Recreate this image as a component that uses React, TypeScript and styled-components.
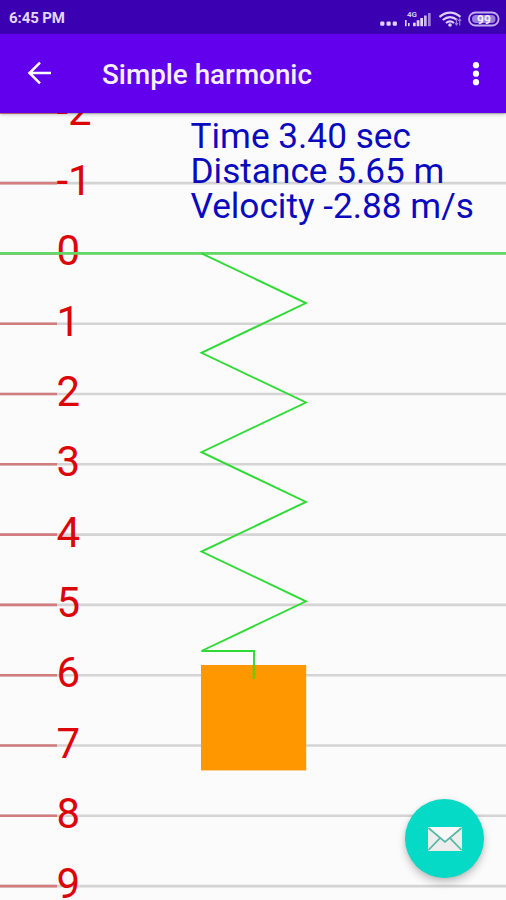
import React from "react";
import styled, { createGlobalStyle } from "styled-components";

const GlobalStyle = createGlobalStyle`
  *, *::before, *::after { box-sizing: border-box; }
  body { margin: 0; background: #fbfbfb; font-family: Roboto, "Liberation Sans", sans-serif; }
`;

const Screen = styled.div`
  display: flex;
  flex-direction: column;
  width: 506px;
  height: 900px;
  overflow: hidden;
  background: #fbfbfb;
`;

const StatusBar = styled.div`
  display: flex;
  align-items: center;
  justify-content: space-between;
  flex: none;
  height: 34px;
  padding: 2px 6px 0 9px;
  background: #3a00b2;
  z-index: 2;
`;

const Clock = styled.span`
  color: #e4d8f8;
  font-size: 15px;
  font-weight: 700;
  line-height: 20px;
  letter-spacing: -0.1px;
`;

const StatusIcons = styled.svg`
  display: block;
  width: 122px;
  height: 24px;
`;

const AppBar = styled.header`
  display: flex;
  align-items: center;
  flex: none;
  height: 79px;
  padding: 0 21px 0 26px;
  background: #6200ee;
  box-shadow: 0 1px 4px rgba(0, 0, 0, 0.3);
  z-index: 1;
`;

const IconButton = styled.button`
  display: flex;
  padding: 0;
  border: 0;
  background: none;
  color: #fff;
`;

const Title = styled.h1`
  flex: 1;
  margin: 3px 0 0 49px;
  color: #f6efff;
  font-size: 27.8px;
  font-weight: 500;
  line-height: 36px;
`;

const Content = styled.main`
  position: relative;
  flex: 1;
  overflow: hidden;
`;

const Chart = styled.svg`
  display: block;
  width: 506px;
  height: 787px;
`;

const AxisLabel = styled.text`
  fill: #dc0509;
  font-family: Roboto, "Liberation Sans", sans-serif;
  font-size: 42px;
`;

const Readout = styled.div`
  position: absolute;
  left: 190.5px;
  top: 6px;
  color: #0a0abf;
  font-size: 35.2px;
  line-height: 35.2px;
  white-space: nowrap;
`;

const ReadoutLine = styled.div``;

const MailButton = styled.button`
  position: absolute;
  right: 22px;
  bottom: 22px;
  display: flex;
  align-items: center;
  justify-content: center;
  width: 79px;
  height: 79px;
  padding: 0;
  border: 0;
  border-radius: 50%;
  background: #04dac5;
  box-shadow: 0 5px 9px rgba(0, 0, 0, 0.2), 0 1px 4px rgba(0, 0, 0, 0.1);
`;

const UNIT = 70.3;
const ORIGIN = 140.4;
const marks = [-2, -1, 0, 1, 2, 3, 4, 5, 6, 7, 8, 9];
const lineY = (mark: number) => ORIGIN + mark * UNIT;

const springPoints = Array.from({ length: 9 }, (_, i) => `${i % 2 ? 306 : 201.5},${ORIGIN + i * 49.7}`)
  .concat(["254,538", "254,566"])
  .join(" ");

function Oscillator() {
  return (
    <Chart viewBox="0 0 506 787">
      {marks.map((mark) => (
        <g key={mark}>
          <line x1="0" x2="506" y1={lineY(mark)} y2={lineY(mark)} stroke="#d4d4d4" strokeWidth="2.6" />
          <line x1="0" x2="57" y1={lineY(mark)} y2={lineY(mark)} stroke="#d27c7f" strokeWidth="2.6" />
        </g>
      ))}
      {marks.map((mark) => (
        <AxisLabel key={mark} x="56.5" y={lineY(mark) + 12}>
          {mark}
        </AxisLabel>
      ))}
      <rect x="201" y="552" width="105.2" height="105.4" fill="#ff9800" />
      <line x1="0" x2="506" y1={ORIGIN} y2={ORIGIN} stroke="#62d966" strokeWidth="2.6" />
      <polyline points={springPoints} fill="none" stroke="#2edb34" strokeWidth="1.9" />
      <line x1="254" x2="254" y1="552" y2="566" stroke="#7bc400" strokeWidth="2.8" />
    </Chart>
  );
}

function SystemIcons() {
  return (
    <StatusIcons viewBox="378 4 122 24" fill="none">
      <g fill="#e2d5fa">
        <rect x="380.2" y="19.6" width="4.2" height="4.2" rx="1.2" />
        <rect x="386.5" y="19.6" width="4.2" height="4.2" rx="1.2" />
        <rect x="392.7" y="19.6" width="4.2" height="4.2" rx="1.2" />
        <rect x="405" y="18" width="1.6" height="6.2" />
        <rect x="408" y="21" width="1.6" height="3.2" />
        <rect x="413" y="20.7" width="2.7" height="3.5" />
        <rect x="416.7" y="18.2" width="2.7" height="6" />
        <rect x="420.3" y="16" width="2.7" height="8.2" />
        <rect x="424" y="13.5" width="2.7" height="10.7" opacity="0.85" />
        <rect x="428" y="11" width="2.7" height="13.2" opacity="0.6" />
      </g>
      <text x="407" y="15" fill="#d4c4f2" fontFamily="Roboto, sans-serif" fontSize="8" fontWeight="700">4G</text>
      <g stroke="#ded0f8" strokeWidth="2.2">
        <path d="M439.5 14.8q10.5-8.4 21 0" />
        <path d="M442.8 18q7.2-5.8 14.4 0" />
        <path d="M446 21q4-3.2 8 0" />
      </g>
      <circle cx="450" cy="23" r="1.8" fill="#ded0f8" />
      <path d="M456.5 16.5v6.5m-1.5-2 1.5 2 1.5-2M459.7 23.5v-6.5m-1.5 2 1.5-2 1.5 2" stroke="#9b7bdc" strokeWidth="1.2" />
      <rect x="469" y="10.5" width="29.6" height="13" rx="6.5" stroke="#c3afee" strokeWidth="1.8" />
      <rect x="472" y="13" width="23.5" height="8" rx="4" fill="#9a7edb" />
      <text x="477" y="21.6" fill="#f5edff" fontFamily="Roboto, sans-serif" fontSize="12" fontWeight="700">99</text>
    </StatusIcons>
  );
}

export default function App() {
  return (
    <>
      <GlobalStyle />
      <Screen>
        <StatusBar>
          <Clock>6:45 PM</Clock>
          <SystemIcons />
        </StatusBar>
        <AppBar>
          <IconButton aria-label="Back">
            <svg width="27" height="27" viewBox="0 0 27 27" fill="none" stroke="#fff" strokeWidth="2.5">
              <path d="M25 13H4M14 2.7 3.5 13 14 23.3" />
            </svg>
          </IconButton>
          <Title>Simple harmonic</Title>
          <IconButton aria-label="More options">
            <svg width="18" height="28" viewBox="0 0 18 28" fill="#fff">
              <circle cx="9" cy="5.2" r="3.1" />
              <circle cx="9" cy="13.7" r="3.1" />
              <circle cx="9" cy="22.2" r="3.1" />
            </svg>
          </IconButton>
        </AppBar>
        <Content>
          <Oscillator />
          <Readout>
            <ReadoutLine>Time 3.40 sec</ReadoutLine>
            <ReadoutLine>Distance 5.65 m</ReadoutLine>
            <ReadoutLine>Velocity -2.88 m/s</ReadoutLine>
          </Readout>
          <MailButton aria-label="Send mail">
            <svg width="36" height="26" viewBox="0 0 36 26" fill="none">
              <rect x="1" y="1" width="34" height="24" rx="1" fill="#ededed" />
              <path d="M1 1h34L18 15.5z" fill="#f8f8f8" />
              <path d="M1.5 2 18 16 34.5 2M1.5 24 13 12.2M34.5 24 23 12.2" stroke="#55b8a6" strokeWidth="1.7" />
            </svg>
          </MailButton>
        </Content>
      </Screen>
    </>
  );
}
